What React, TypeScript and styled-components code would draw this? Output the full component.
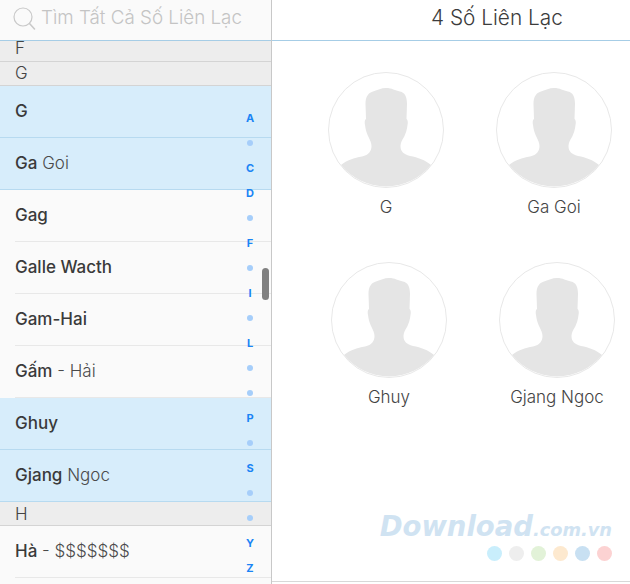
import React from 'react';
import styled, { createGlobalStyle } from 'styled-components';

const GlobalStyle = createGlobalStyle`
  html, body {
    margin: 0;
    padding: 0;
    background: #ffffff;
  }
  body {
    font-family: Inter, "Liberation Sans", sans-serif;
    overflow: hidden;
  }
`;

const Page = styled.div`
  width: 630px;
  height: 584px;
  display: flex;
  overflow: hidden;
  position: relative;
`;

const Sidebar = styled.aside`
  width: 272px;
  flex-shrink: 0;
  height: 584px;
  box-sizing: border-box;
  border-right: 1px solid #c8c8c8;
  background: #fafafa;
  display: flex;
  flex-direction: column;
  position: relative;
  overflow: hidden;
`;

const SearchBar = styled.div`
  height: 41px;
  flex-shrink: 0;
  box-sizing: border-box;
  border-bottom: 1px solid #a6cde6;
  display: flex;
  align-items: center;
  padding: 0 0 6px 13px;
  gap: 4px;
  color: #c4c4c4;
  font-size: 18.8px;
  font-weight: 300;
  white-space: nowrap;
`;

const SectionHead = styled.div<{ $height: number; $shift: number }>`
  height: ${props => props.$height}px;
  flex-shrink: 0;
  box-sizing: border-box;
  background: #ededed;
  border-bottom: 1px solid #d4d4d4;
  padding-left: 15px;
  font-size: 17px;
  font-weight: 300;
  line-height: 22px;
  color: #444444;
  & > span {
    display: block;
    transform: translateY(${props => props.$shift}px);
  }
`;

const Row = styled.div<{ $selected?: boolean }>`
  height: 52px;
  flex-shrink: 0;
  box-sizing: border-box;
  padding: 0 0 1px 15px;
  display: flex;
  align-items: center;
  font-size: 17px;
  white-space: pre;
  position: relative;
  background: ${props => (props.$selected ? '#d7edfb' : 'transparent')};
  border-bottom: 1px solid ${props => (props.$selected ? '#b7daf0' : 'transparent')};
  &::after {
    content: '';
    display: ${props => (props.$selected ? 'none' : 'block')};
    position: absolute;
    left: 15px;
    right: 0;
    bottom: -1px;
    height: 1px;
    background: #e8e8e8;
  }
`;

const Strong = styled.span`
  font-weight: 500;
  color: #3a3a3a;
`;

const Light = styled.span`
  font-weight: 300;
  color: #4a4a4a;
`;

const IndexRail = styled.div`
  position: absolute;
  top: 105px;
  left: 238px;
  width: 24px;
  display: flex;
  flex-direction: column;
  align-items: center;
`;

const IndexItem = styled.div`
  height: 25px;
  display: flex;
  align-items: center;
  justify-content: center;
  font-size: 11px;
  font-weight: 700;
  color: #1a84f5;
`;

const IndexDot = styled.span`
  width: 6px;
  height: 6px;
  border-radius: 50%;
  background: #a6cefa;
`;

const ScrollThumb = styled.div`
  position: absolute;
  top: 268px;
  left: 262px;
  width: 7px;
  height: 32px;
  border-radius: 4px;
  background: #808080;
`;

const Main = styled.main`
  flex: 1;
  display: flex;
  flex-direction: column;
  height: 582px;
  box-sizing: border-box;
  border-bottom: 1px solid #d8d8d8;
`;

const MainHeader = styled.header`
  height: 41px;
  flex-shrink: 0;
  box-sizing: border-box;
  border-bottom: 1px solid #a6cde6;
  padding: 0 0 5px 159px;
  display: flex;
  align-items: center;
  font-size: 20.8px;
  font-weight: 300;
  color: #3c3c3c;
  white-space: nowrap;
`;

const ContactGrid = styled.div`
  display: flex;
  flex-direction: column;
  gap: 43px;
  padding-top: 31px;
`;

const ContactRow = styled.div<{ $inset: number }>`
  display: flex;
  gap: 52px;
  padding-left: ${props => props.$inset}px;
`;

const Card = styled.div`
  width: 116px;
  display: flex;
  flex-direction: column;
  align-items: center;
  gap: 8px;
`;

const Name = styled.div`
  font-size: 17px;
  font-weight: 300;
  line-height: 23px;
  color: #444444;
  white-space: nowrap;
`;

const Watermark = styled.div`
  position: absolute;
  left: 372px;
  top: 510px;
  display: flex;
  flex-direction: column;
  align-items: flex-end;
  width: 240px;
`;

const WatermarkText = styled.div`
  font-family: "DejaVu Sans", sans-serif;
  font-style: italic;
  font-weight: 700;
  color: #d0e3f2;
  white-space: nowrap;
  font-size: 27.5px;
  line-height: 32px;
  & > small {
    font-size: 17.8px;
  }
`;

const DotRow = styled.div`
  display: flex;
  gap: 7px;
`;

const ColorDot = styled.span<{ $color: string }>`
  width: 15px;
  height: 15px;
  border-radius: 50%;
  background: ${props => props.$color};
`;

const SearchIcon = () => (
  <svg width="24" height="26" viewBox="0 0 24 26" fill="none" stroke="#c9c9c9" style={{ flexShrink: 0, marginTop: 5 }}>
    <circle cx="10" cy="10" r="9" strokeWidth="1.2" />
    <path d="M16.5 16.5 L21.5 22" strokeWidth="1.6" strokeLinecap="round" />
  </svg>
);

const Avatar = () => (
  <svg width="116" height="116" viewBox="0 0 116 116">
    <circle cx="58" cy="58" r="57.5" fill="#ffffff" stroke="#e8e8e8" strokeWidth="1" />
    <path
      fill="#e5e5e5"
      d="M58 16C64 16 67 18.5 72 19.5C77 20.5 79 25 79 32L78.5 47C80 48 80 51 79.5 53C79 58 77.5 62 76 65C74 68 72.5 71 72.5 74C72.5 79 75 82 82 84C90 85.5 97 88 103 93A58 58 0 0 1 13 93C19 88 26 86 34 84.5C41 83 43.5 79 43.5 74C43.5 71 42 68 40.5 65C39 62 37.5 58 37 53C36.5 51 36.5 48 38 47L37.5 32C37.5 25 40 21 45 19.5C50 18 53 16 58 16Z"
    />
  </svg>
);

type RowData = { strong: string; light?: string; selected?: boolean };

const topRows: RowData[] = [
  { strong: 'G', selected: true },
  { strong: 'Ga', light: ' Goi', selected: true },
  { strong: 'Gag' },
  { strong: 'Galle Wacth' },
  { strong: 'Gam-Hai' },
  { strong: 'Gấm', light: ' - Hải' },
  { strong: 'Ghuy', selected: true },
  { strong: 'Gjang', light: ' Ngoc', selected: true },
];

const indexItems = ['A', '', 'C', 'D', '', 'F', '', 'I', '', 'L', '', '', 'P', '', 'S', '', '', 'Y', 'Z'];

const ContactRowItem: React.FC<{ row: RowData }> = ({ row }) => (
  <Row $selected={row.selected}>
    <Strong>{row.strong}</Strong>
    {row.light && <Light>{row.light}</Light>}
  </Row>
);

const App: React.FC = () => (
  <Page>
    <GlobalStyle />
    <Sidebar>
      <SearchBar>
        <SearchIcon />
        <span>Tìm Tất Cả Số Liên Lạc</span>
      </SearchBar>
      <SectionHead $height={21} $shift={-4}>
        <span>F</span>
      </SectionHead>
      <SectionHead $height={24} $shift={0}>
        <span>G</span>
      </SectionHead>
      {topRows.map(row => (
        <ContactRowItem key={row.strong} row={row} />
      ))}
      <SectionHead $height={24} $shift={1}>
        <span>H</span>
      </SectionHead>
      <ContactRowItem row={{ strong: 'Hà', light: ' - $$$$$$$' }} />
      <IndexRail>
        {indexItems.map((item, i) => (
          <IndexItem key={i}>{item || <IndexDot />}</IndexItem>
        ))}
      </IndexRail>
      <ScrollThumb />
    </Sidebar>
    <Main>
      <MainHeader>4 Số Liên Lạc</MainHeader>
      <ContactGrid>
        <ContactRow $inset={56}>
          <Card>
            <Avatar />
            <Name>G</Name>
          </Card>
          <Card>
            <Avatar />
            <Name>Ga Goi</Name>
          </Card>
        </ContactRow>
        <ContactRow $inset={59}>
          <Card>
            <Avatar />
            <Name>Ghuy</Name>
          </Card>
          <Card>
            <Avatar />
            <Name>Gjang Ngoc</Name>
          </Card>
        </ContactRow>
      </ContactGrid>
    </Main>
    <Watermark>
      <WatermarkText>
        Download<small>.com.vn</small>
      </WatermarkText>
      <DotRow>
        <ColorDot $color="#c9eefc" />
        <ColorDot $color="#eeeeee" />
        <ColorDot $color="#e2f2d8" />
        <ColorDot $color="#fde9cf" />
        <ColorDot $color="#c8e0f2" />
        <ColorDot $color="#fcd2d2" />
      </DotRow>
    </Watermark>
  </Page>
);

export default App;
